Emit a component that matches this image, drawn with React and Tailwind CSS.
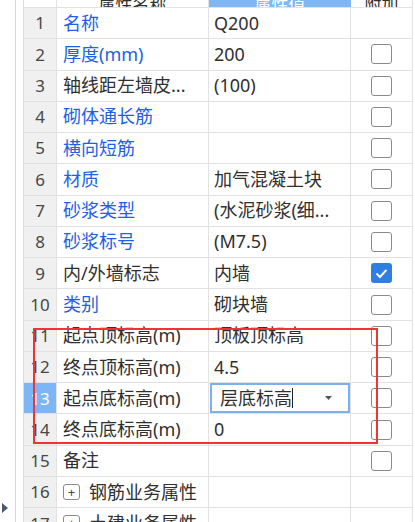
import React from 'react';

const rows = [
  { n: '1', name: '名称', blue: true, value: 'Q200', box: null },
  { n: '2', name: '厚度(mm)', blue: true, value: '200', box: false },
  { n: '3', name: '轴线距左墙皮...', blue: false, value: '(100)', box: false },
  { n: '4', name: '砌体通长筋', blue: true, value: '', box: false },
  { n: '5', name: '横向短筋', blue: true, value: '', box: false },
  { n: '6', name: '材质', blue: true, value: '加气混凝土块', box: false },
  { n: '7', name: '砂浆类型', blue: true, value: '(水泥砂浆(细...', box: false },
  { n: '8', name: '砂浆标号', blue: true, value: '(M7.5)', box: false },
  { n: '9', name: '内/外墙标志', blue: false, value: '内墙', box: true },
  { n: '10', name: '类别', blue: true, value: '砌块墙', box: false },
  { n: '11', name: '起点顶标高(m)', blue: false, value: '顶板顶标高', box: false },
  { n: '12', name: '终点顶标高(m)', blue: false, value: '4.5', box: false },
  { n: '13', name: '起点底标高(m)', blue: false, value: '层底标高', box: false, editing: true },
  { n: '14', name: '终点底标高(m)', blue: false, value: '0', box: false },
  { n: '15', name: '备注', blue: false, value: '', box: false },
  { n: '16', name: '钢筋业务属性', blue: false, value: '', box: null, group: true },
  { n: '17', name: '土建业务属性', blue: false, value: '', box: null, group: true },
];

const Checkbox = ({ checked }) =>
  checked ? (
    <div className="w-[21px] h-[20px] rounded-[3px] bg-[#2f7fe2] flex items-center justify-center">
      <svg width="13" height="11" viewBox="0 0 13 11">
        <path d="M1.5 5.5 L5 9 L11.5 1.8" fill="none" stroke="white" strokeWidth="2" />
      </svg>
    </div>
  ) : (
    <div className="w-[21px] h-[20px] rounded-[3px] border-[1.5px] border-[#8a8a8a] bg-white" />
  );

export default function App() {
  return (
    <div
      className="relative w-[415px] h-[522px] overflow-hidden bg-white flex items-start text-[#303030]"
      style={{ fontFamily: '"Noto Sans", "Noto Sans CJK SC", sans-serif' }}
    >
      {/* left gutter */}
      <div className="w-[23px] h-full shrink-0 flex">
        <div className="w-[15px] relative">
          <svg className="absolute left-[2px] top-[503px]" width="7" height="10" viewBox="0 0 7 10">
            <path d="M0 0 L6 5 L0 10 Z" fill="#4a5a70" />
          </svg>
        </div>
        <div className="w-px bg-[#d6d6d6]" />
      </div>

      {/* property grid */}
      <div className="flex flex-col border-l border-[#dcdcdc]">
        {/* header (mostly scrolled out of view) */}
        <div className="flex h-[8px] shrink-0 overflow-hidden border-b border-[#e2e2e2] text-[17px] leading-[20px]">
          <div className="w-[33px] border-r border-[#e2e2e2]" />
          <div className="w-[152px] border-r border-[#e2e2e2] flex justify-center items-end">
            <span className="-mb-[8px] shrink-0">属性名称</span>
          </div>
          <div className="w-[142px] bg-[#80b7f2] text-white flex justify-center items-end">
            <span className="-mb-[8px] shrink-0">属性值</span>
          </div>
          <div className="w-[62px] border-r border-[#e2e2e2] flex justify-center items-end">
            <span className="-mb-[8px] shrink-0">附加</span>
          </div>
        </div>

        {rows.map((r) => (
          <div key={r.n} className="flex h-[31.27px] shrink-0 border-b border-[#e2e2e2] text-[18px]">
            <div
              className={`w-[33px] border-r border-[#e2e2e2] flex items-center justify-center text-[17px] ${
                r.editing ? 'bg-[#7db6f4] text-white' : 'bg-[#f0f0f0] text-[#474747]'
              }`}
            >
              {r.n}
            </div>
            <div className="w-[152px] border-r border-[#e2e2e2] flex items-center pl-[6px] whitespace-nowrap overflow-hidden">
              {r.group && (
                <div className="w-[17px] h-[16px] mr-[9px] rounded-[3px] border border-[#8a8a8a] flex items-center justify-center text-[13px] leading-none text-[#444]">
                  +
                </div>
              )}
              <span className={r.blue ? 'text-[#2160e4]' : ''}>{r.name}</span>
            </div>
            <div className="w-[142px] border-r border-[#e2e2e2] flex items-center whitespace-nowrap overflow-hidden">
              {r.editing ? (
                <div className="w-[140px] h-[30px] ml-px border-2 border-[#7cb0ea] flex items-center pl-[8px] pr-[16px]">
                  <span>{r.value}</span>
                  <span className="w-px h-[20px] bg-[#222]" />
                  <svg className="ml-auto" width="7" height="4" viewBox="0 0 7 4">
                    <path d="M0 0 L7 0 L3.5 4 Z" fill="#555" />
                  </svg>
                </div>
              ) : (
                <span className="pl-[5px]">{r.value}</span>
              )}
            </div>
            <div className="w-[62px] border-r border-[#e2e2e2] flex items-center justify-center">
              {r.box !== null && <Checkbox checked={r.box} />}
            </div>
          </div>
        ))}
      </div>

      {/* highlight frame */}
      <div className="absolute left-[33px] top-[328px] w-[345px] h-[116px] border-[2.5px] border-[#ee3434] pointer-events-none" />
    </div>
  );
}
